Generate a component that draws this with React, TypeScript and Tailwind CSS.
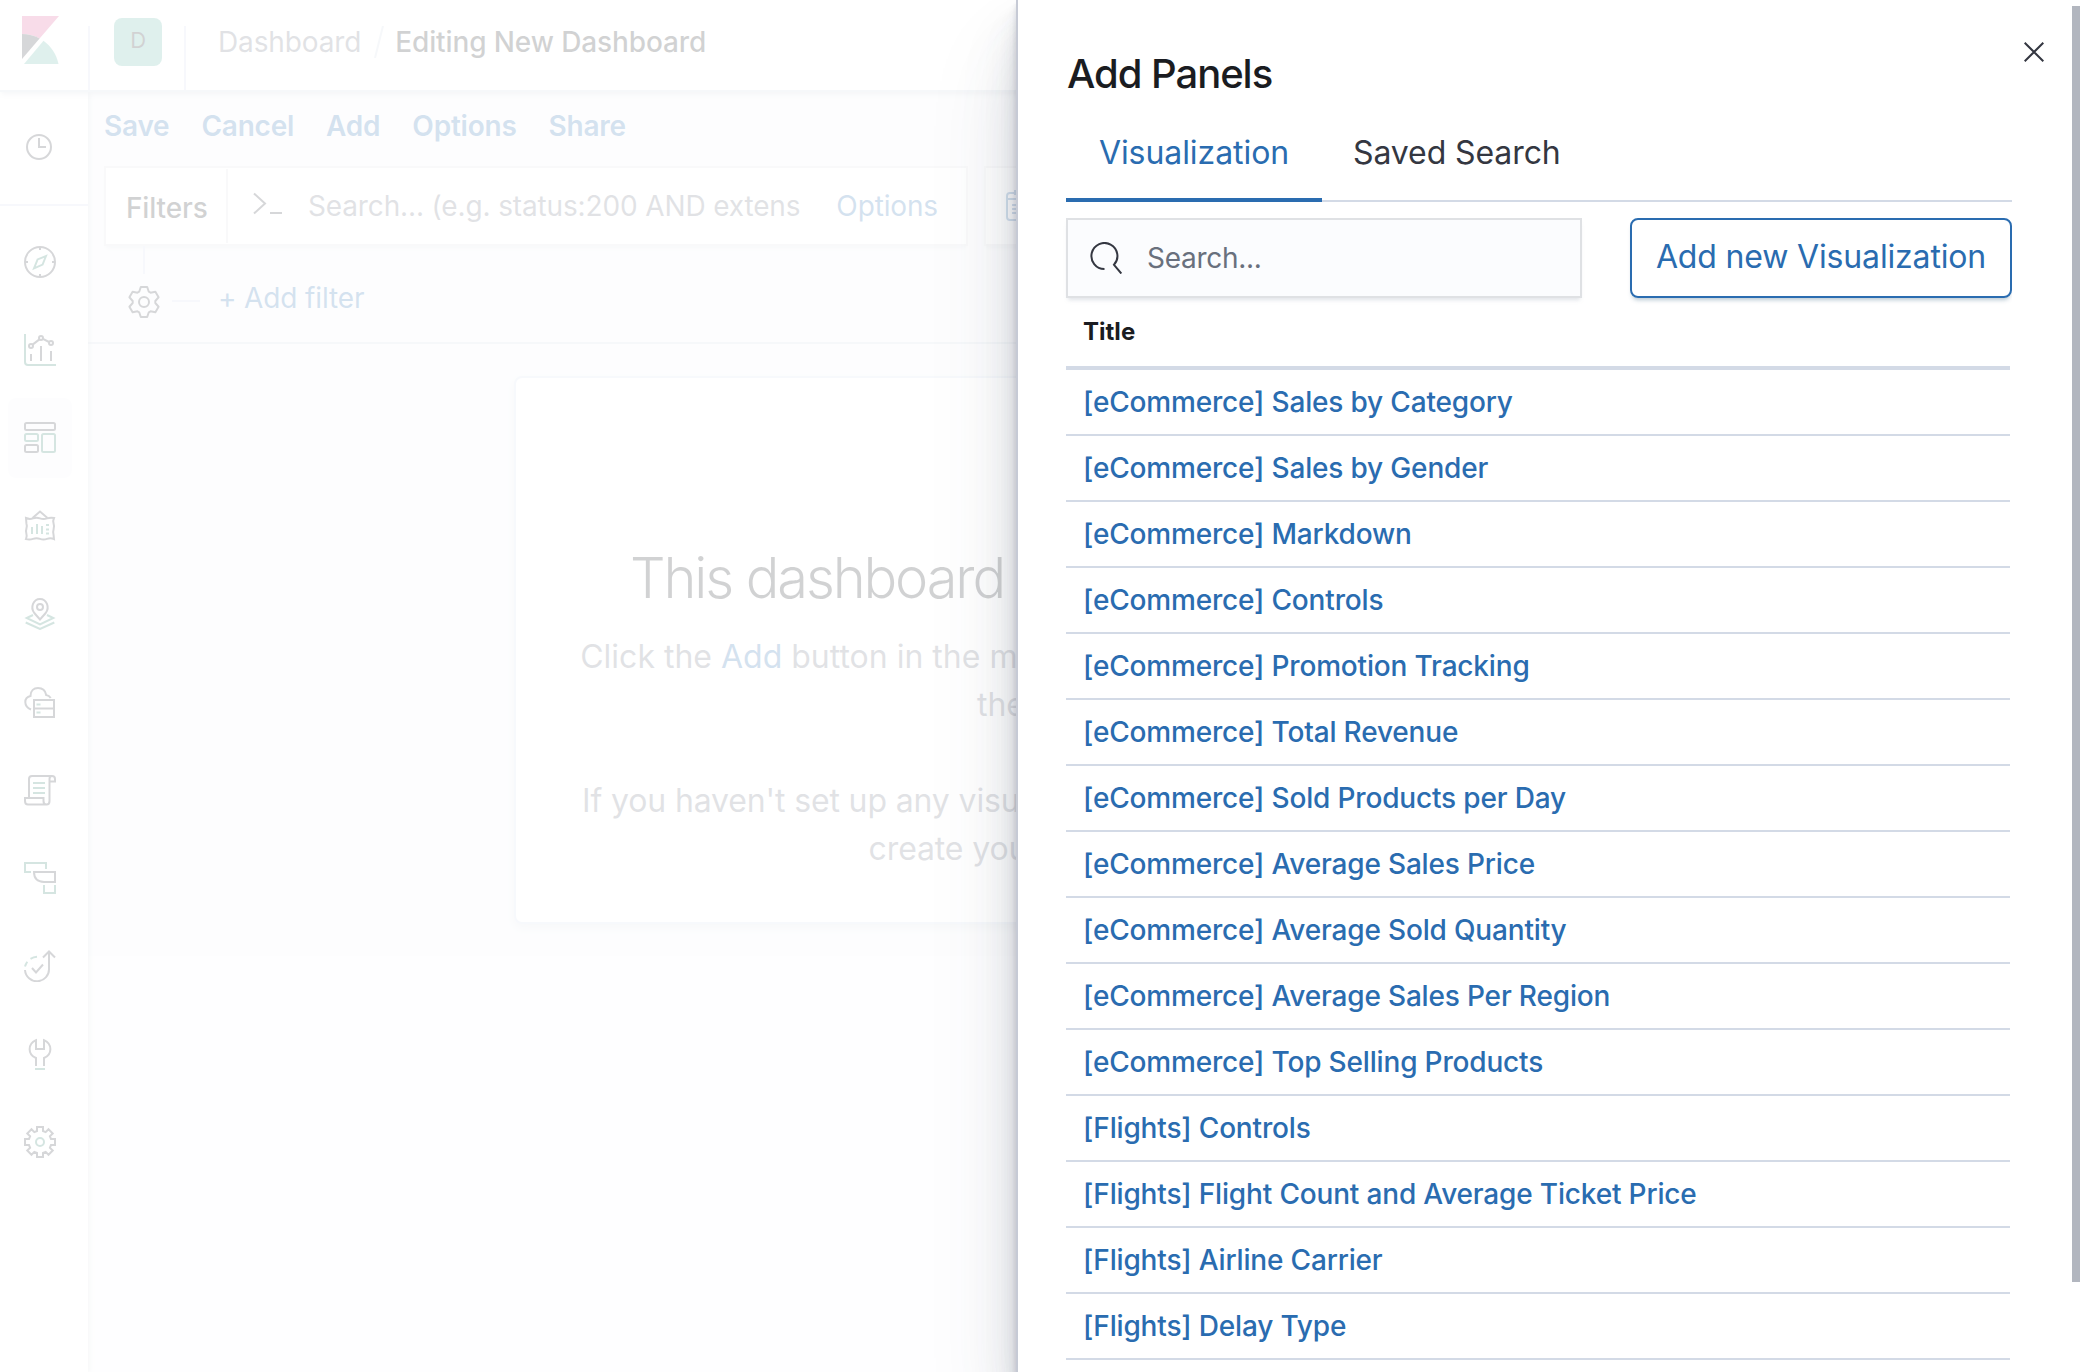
import type { ReactNode } from "react";

const DARK = "#343741";
const TEAL = "#2d7d6a";

function Icon({ children, size = 32, className = "" }: { children: ReactNode; size?: number; className?: string }) {
  return (
    <svg
      width={size}
      height={size}
      viewBox={`0 0 ${size} ${size}`}
      fill="none"
      stroke={DARK}
      strokeWidth="2"
      className={`shrink-0 ${className}`}
    >
      {children}
    </svg>
  );
}

const rotations = (points: [number, number][], count: number) =>
  Array.from({ length: count }, (_, i) => {
    const a = (i * 2 * Math.PI) / count;
    return points
      .map(([x, y]) => `${(16 + x * Math.cos(a) - y * Math.sin(a)).toFixed(2)},${(16 + x * Math.sin(a) + y * Math.cos(a)).toFixed(2)}`)
      .join(" ");
  }).join(" ");

const filterGear = rotations([[-4.8, -10.3], [-3.2, -15], [3.2, -15], [4.8, -10.3]], 6);
const settingsGear = rotations([[-3, -11], [-3, -15], [3, -15], [3, -11]], 8);

function KibanaLogo() {
  return (
    <svg width="37" height="48" viewBox="0 0 37 48" className="shrink-0">
      <path d="M0 0H37L17.6 22.4C12.5 19.6 6.5 18 0 18Z" fill="#db5291" />
      <path d="M0 18C6.5 18 12.5 19.6 17.6 22.4L0 43Z" fill="#343741" />
      <path d="M21.5 24.8C29 30.2 34.5 38.3 36.5 48H2Z" fill="#5fb5a6" />
    </svg>
  );
}

const navIcons: { name: string; active?: boolean; art: ReactNode }[] = [
  {
    name: "Discover",
    art: (
      <>
        <circle cx="16" cy="16" r="15" />
        <path d="M16 1v3M16 28v3M1 16h3M28 16h3" />
        <path d="M22 10 18.6 18.6 10 22.4 13.6 13.4Z" stroke={TEAL} />
      </>
    ),
  },
  {
    name: "Visualize",
    art: (
      <>
        <path d="M1 0v28q0 3 3 3h28" stroke={TEAL} />
        <path d="M7 20v7M17 12v15M27 17v10M8.6 10.6 15.4 5.4M19 4.8 25 8" />
        <circle cx="7" cy="12" r="2" />
        <circle cx="17" cy="4" r="2" />
        <circle cx="27" cy="9" r="2" />
      </>
    ),
  },
  {
    name: "Dashboard",
    active: true,
    art: (
      <>
        <rect x="1" y="1" width="30" height="7" rx="1.5" />
        <rect x="1" y="12" width="13" height="7" rx="1.5" stroke={TEAL} />
        <rect x="1" y="23" width="13" height="7" rx="1.5" />
        <rect x="18" y="12" width="13" height="18" rx="1.5" stroke={TEAL} />
      </>
    ),
  },
  {
    name: "Canvas",
    art: (
      <>
        <path d="M8.5 8 16 1.5 23.5 8" />
        <path d="M2 8q3.5 1.6 7 .4t7 0 7 0 7-.4q-1.4 2.9-.4 5.7t0 5.7 0 5.700l.4 4q-3.5-1.4-7-.2t-7 0-7 0-7 .2q1.3-2.8.4-5.3t0-5.2 0-5.200Z" />
        <path d="M8 17v7M13 14v10M18 16v8M22 15h3M22 19.5h3M22 23.500h3" stroke={TEAL} />
      </>
    ),
  },
  {
    name: "Maps",
    art: (
      <>
        <path d="M16 21.500 10.300 15C6 9.500 9.300 1 16 1s10 8.500 5.700 14Z" />
        <circle cx="16" cy="9" r="3" />
        <path d="M9 17 2.700 20 16 26.500 29.300 20 23 17M1.700 24.500 16 31 30.300 24.500" stroke={TEAL} />
      </>
    ),
  },
  {
    name: "Infrastructure",
    art: (
      <>
        <path d="M7 23.500C-.5 20.500-.5 11.500 6.500 10 6.500 4.500 10 2 14 2c4.500 0 7.500 3 8.200 7 2 .3 3.600 1.500 4.500 3" />
        <path d="M10 14h20v17H10ZM10 22.500h20" />
        <path d="M12.500 18.500h4M12.500 26.500h4" stroke={TEAL} />
      </>
    ),
  },
  {
    name: "Logs",
    art: (
      <>
        <path d="M5 24V5q0-3 3-3h20q-2.500 0-2.500 3v22q0 3.500-3 3.500t-3-3.500v-3H1v3q0 3.500 3 3.500h18.500M28 2q3 0 3 3v2.500h-5.500" />
        <path d="M9 9h12M9 14h12M9 19h12" stroke={TEAL} />
      </>
    ),
  },
  {
    name: "APM",
    art: (
      <>
        <path d="M7 10H1V1h21v6" stroke={TEAL} />
        <path d="M10 10h21v10H20q-10-.5-10-10Z" />
        <path d="M20 23v8h11v-8" stroke={TEAL} />
      </>
    ),
  },
  {
    name: "Uptime",
    art: (
      <>
        <path d="M1 20a12 12 0 0 0 24-1.500V1.500M19 7.500l6-6 6 6" />
        <path d="M8 18l4 4.500 7-8" />
        <path d="M1 16.500q.7-2.500 2.300-4.800M6.500 8.800Q9.500 7 13 6.800" stroke={TEAL} />
      </>
    ),
  },
  {
    name: "Dev Tools",
    art: (
      <>
        <path d="M12 28v-8C3.500 16.500 3.500 6 12 2.200V11h8V2.200c8.500 3.800 8.500 14.300 0 17.800v8" />
        <path d="M11 31h10" stroke={TEAL} />
      </>
    ),
  },
  {
    name: "Management",
    art: (
      <>
        <polygon points={settingsGear} />
        <circle cx="16" cy="16" r="4" stroke={TEAL} />
      </>
    ),
  },
];

const panels = [
  "[eCommerce] Sales by Category",
  "[eCommerce] Sales by Gender",
  "[eCommerce] Markdown",
  "[eCommerce] Controls",
  "[eCommerce] Promotion Tracking",
  "[eCommerce] Total Revenue",
  "[eCommerce] Sold Products per Day",
  "[eCommerce] Average Sales Price",
  "[eCommerce] Average Sold Quantity",
  "[eCommerce] Average Sales Per Region",
  "[eCommerce] Top Selling Products",
  "[Flights] Controls",
  "[Flights] Flight Count and Average Ticket Price",
  "[Flights] Airline Carrier",
  "[Flights] Delay Type",
];

function Header() {
  return (
    <header className="relative z-10 flex h-[92px] shrink-0 items-start border-b-2 border-[#d3dae6] bg-white shadow-[0_4px_4px_-2px_rgba(152,162,179,0.3),0_2px_8px_rgba(152,162,179,0.2)]">
      <div className="flex w-[88px] pt-4 pl-[22px]">
        <KibanaLogo />
      </div>
      <div className="mt-[26px] h-16 w-0.5 bg-[#d9dcf0]" />
      <div className="mt-[18px] ml-6 flex h-12 w-12 items-center justify-center rounded-lg bg-[#5fb5a6] pb-1 text-[22px] leading-none">
        D
      </div>
      <div className="mt-[26px] ml-[22px] h-16 w-0.5 bg-[#d9dcf0]" />
      <div className="mt-[22px] ml-8 flex h-10 items-center leading-10">
        <span className="text-[#69707d]">Dashboard</span>
        <svg width="10" height="32" viewBox="0 0 10 32" className="mr-[11px] ml-[13px]" stroke="#d3dae6" strokeWidth="2">
          <path d="M9 0 1 32" />
        </svg>
        <span className="font-[550] tracking-[-0.004em]">Editing New Dashboard</span>
      </div>
    </header>
  );
}

function Sidebar() {
  return (
    <nav className="relative z-[1] flex w-[88px] shrink-0 flex-col bg-white shadow-[2px_0_4px_rgba(152,162,179,0.35)]">
      <div className="flex h-[114px] border-b-2 border-[#d9dcf0] pt-[42px] pl-[26px]">
        <Icon size={26}>
          <circle cx="13" cy="13" r="12" />
          <path d="M13 4v9h7" />
        </Icon>
      </div>
      <ul className="flex flex-col gap-2 px-2 pt-4">
        {navIcons.map((item) => (
          <li
            key={item.name}
            className={`flex h-20 w-16 items-center justify-center rounded-lg ${item.active ? "bg-[#f5f7fa]" : ""}`}
          >
            <Icon>{item.art}</Icon>
          </li>
        ))}
      </ul>
    </nav>
  );
}

function QueryBar() {
  return (
    <div className="mt-5 ml-4 flex gap-4">
      <div className="flex h-20 w-[864px] shrink-0 items-center border-2 border-[#e0e2e6] bg-white shadow-[0_4px_4px_-2px_rgba(152,162,179,0.3)]">
        <div className="flex h-[74px] w-[122px] items-center border-r-2 border-[#e0e2e6] pt-1 pl-5 font-[550]">Filters</div>
        <svg width="30" height="24" viewBox="0 0 30 24" fill="none" stroke={DARK} strokeWidth="2" className="ml-[25px] shrink-0 -translate-y-0.5">
          <path d="M1 1.500 12 11.500 1 21.500M17 21h12" />
        </svg>
        <span className="ml-[25px] text-[#69707d]">Search... (e.g. status:200 AND extens</span>
        <span className="ml-auto pr-7 text-[#2a6cb0]">Options</span>
      </div>
      <div className="flex h-20 w-[600px] items-center border-2 border-[#e0e2e6] bg-white pl-5 shadow-[0_4px_4px_-2px_rgba(152,162,179,0.3)]">
        <svg width="30" height="32" viewBox="0 0 30 32" fill="none" stroke="#2a6cb0" strokeWidth="2">
          <path d="M9 0v5M21 0v5M4 3h22q3 0 3 3v21q0 3-3 3H4q-3 0-3-3V6q0-3 3-3ZM1 9h28M6 15h18M6 19h18M6 23h18" />
        </svg>
      </div>
    </div>
  );
}

function FilterBar() {
  return (
    <div className="flex h-[98px] items-start border-b-2 border-[#d3dae6] pl-[40px]">
      <div className="flex w-8 flex-col items-center">
        <div className="h-7 w-0.5 bg-[#d9dcf0]" />
        <Icon className="mt-3">
          <polygon points={filterGear} strokeLinejoin="round" />
          <circle cx="16" cy="16" r="5" />
        </Icon>
      </div>
      <div className="mt-[54px] ml-3 h-0.5 w-7 bg-[#d9dcf0]" />
      <span className="mt-8 ml-[18px] leading-10 text-[#2a6cb0]">+ Add filter</span>
    </div>
  );
}

function EmptyDashboard() {
  return (
    <div className="mx-auto mt-8 h-[548px] w-[1146px] rounded-lg border-2 border-[#d9dff0] bg-white text-center shadow-[0_4px_8px_rgba(152,162,179,0.3)]">
      <h1 className="mt-[164px] pl-1 text-[56px] leading-[72px] font-light tracking-[-0.038em]">
        This dashboard is empty. Let&rsquo;s fill it up!
      </h1>
      <p className="mt-[19px] pl-1.5 text-[32px] leading-12 whitespace-nowrap text-[#69707d]">
        <span className="block tracking-normal">
          Click the <span className="text-[#2a6cb0]">Add</span> button in the menu bar above to add a visualization to
        </span>
        <span className="block">the dashboard.</span>
      </p>
      <p className="mt-12 pl-1 text-[32px] leading-12 whitespace-nowrap text-[#69707d]">
        If you haven&#39;t set up any visualizations yet, visit the Visualize app to
        <br />
        create your first visualization.
      </p>
    </div>
  );
}

function DashboardPage() {
  return (
    <div className="flex h-full flex-col">
      <Header />
      <div className="flex min-h-0 flex-1">
        <Sidebar />
        <main className="flex min-w-0 flex-1 flex-col overflow-hidden bg-[#fafbfd]">
          <div className="h-[864px] bg-[#f5f7fa]">
            <div className="flex gap-8 pt-[14px] pl-4 leading-10 font-semibold tracking-[-0.008em] text-[#2a6cb0]">
              <span>Save</span>
              <span>Cancel</span>
              <span>Add</span>
              <span>Options</span>
              <span>Share</span>
            </div>
            <QueryBar />
            <FilterBar />
            <EmptyDashboard />
          </div>
        </main>
      </div>
    </div>
  );
}

function AddPanelsFlyout() {
  return (
    <aside className="absolute inset-y-0 right-0 flex w-[1070px] border-l-2 border-[#c6cad5] bg-white shadow-[0_56px_88px_rgba(65,78,101,0.1),0_40px_56px_rgba(65,78,101,0.1),0_28px_32px_rgba(65,78,101,0.1),0_16px_16px_rgba(65,78,101,0.1),0_8px_8px_rgba(65,78,101,0.1),0_4px_4px_rgba(65,78,101,0.1)]">
      <div className="flex w-[994px] flex-col overflow-hidden pl-12">
        <h2 className="mt-[46px] pl-px text-[40px] leading-[56px] font-medium tracking-[-0.026em]">Add Panels</h2>
        <div className="mt-[2px] flex h-[98px] border-b-2 border-[#d3dae6] text-[32px] text-[#343741]">
          <div className="h-[98px] w-64 shrink-0 border-b-4 border-[#2a6cb0] pt-[25px] text-center leading-12 tracking-[-0.002em] text-[#2a6cb0]">
            Visualization
          </div>
          <div className="pt-[25px] pl-[31px] leading-12 tracking-[-0.003em]">Saved Search</div>
        </div>
        <div className="mt-4 flex h-20 justify-between">
          <div className="flex w-[516px] items-center border-2 border-[#dfe1e4] bg-[#fbfcfe] pl-[22px] shadow-[0_4px_4px_-2px_rgba(152,162,179,0.3)]">
            <Icon>
              <path d="M14.500 27A13 13 0 1 1 24 22.800L31.300 31.500" />
            </Icon>
            <span className="ml-[25px] tracking-[-0.01em] text-[#69707d]">Search...</span>
          </div>
          <button className="flex w-[382px] items-center justify-center rounded-lg border-2 border-[#2a6cb0] pb-0.5 text-[32px] tracking-[-0.005em] text-[#2a6cb0] shadow-[0_4px_4px_-2px_rgba(54,97,126,0.35)]">
            Add new Visualization
          </button>
        </div>
        <div className="mr-0.5">
          <div className="flex h-[72px] items-center border-b-4 border-[#d3dae6] pl-[17px] text-2xl font-bold tracking-normal">Title</div>
          {panels.map((title) => (
            <div key={title} className="flex h-[66px] items-center border-b-2 border-[#d3dae6] pl-[17px] font-medium tracking-[-0.006em] text-[#2a6cb0]">
              {title}
            </div>
          ))}
        </div>
      </div>
      <div className="flex flex-1 items-start justify-between pr-1.5">
        <svg width="20" height="20" viewBox="0 0 20 20" fill="none" stroke={DARK} strokeWidth="2" className="mt-[42px] ml-3">
          <path d="M.7.7 19.300 19.300M19.300.7.7 19.300" />
        </svg>
        <div className="mt-1.5 h-[1276px] w-2 bg-[#b2b6bf]" />
      </div>
    </aside>
  );
}

export default function App() {
  return (
    <div className="relative h-[1372px] w-[2086px] overflow-hidden bg-white font-['Inter',sans-serif] text-[28px] tracking-[-0.005em] text-[#1a1c21]">
      <DashboardPage />
      <div className="absolute inset-0 z-20 bg-white/80" />
      <div className="absolute inset-0 z-30">
        <AddPanelsFlyout />
      </div>
    </div>
  );
}
